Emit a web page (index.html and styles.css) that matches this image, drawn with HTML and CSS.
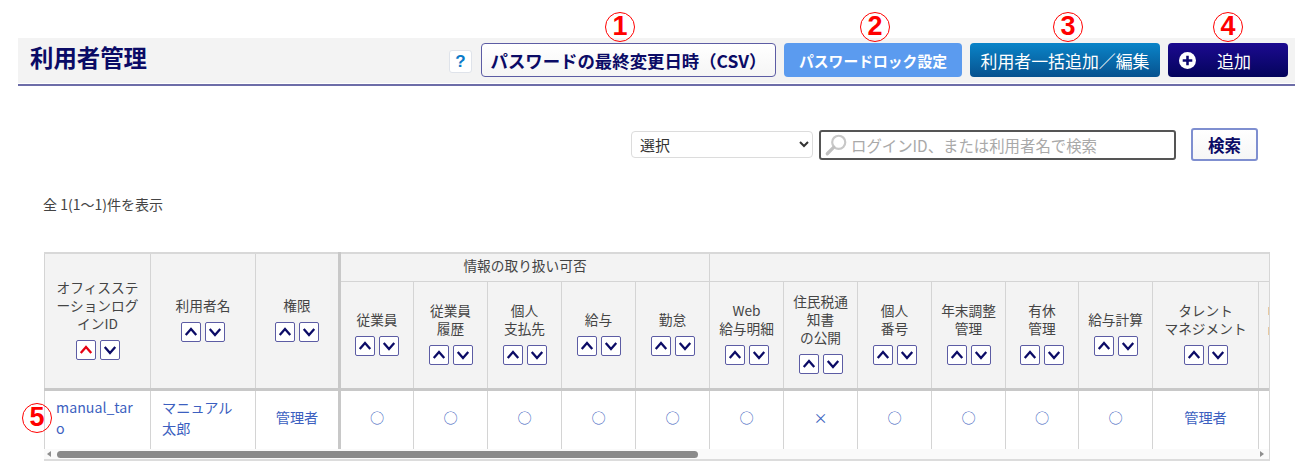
FILE: index.html
```html
<!DOCTYPE html>
<html lang="ja">
<head>
<meta charset="utf-8">
<title>利用者管理</title>
<link rel="stylesheet" href="styles.css">
</head>
<body>
<span class="mark mark-1">1</span>
<span class="mark mark-2">2</span>
<span class="mark mark-3">3</span>
<span class="mark mark-4">4</span>
<span class="mark mark-5">5</span>

<header class="head">
  <div class="head-bar">
    <h1 class="title">利用者管理</h1>
    <div class="actions">
      <button class="help" type="button">?</button>
      <button class="btn btn-csv" type="button">パスワードの最終変更日時（CSV）</button>
      <button class="btn btn-lock" type="button">パスワードロック設定</button>
      <button class="btn btn-bulk" type="button">利用者一括追加／編集</button>
      <button class="btn btn-add" type="button">
        <svg class="plus" viewBox="0 0 16 16" width="17" height="17"><circle cx="8" cy="8" r="8" fill="#fff"/><path d="M8 3.500v9M3.500 8h9" stroke="#0c0670" stroke-width="2.400"/></svg>
        <span>追加</span>
      </button>
    </div>
  </div>
</header>

<form class="search">
  <select class="search-select"><option>選択</option></select>
  <div class="search-box">
    <svg viewBox="0 0 22 22" width="24" height="24"><circle cx="13.500" cy="8.500" r="6" fill="#fff" stroke="#c8c8c8" stroke-width="2"/><path d="M9 13l-6 6" stroke="#c0c0c0" stroke-width="3" stroke-linecap="round"/></svg>
    <input class="search-input" type="text" placeholder="ログインID、または利用者名で検索">
  </div>
  <button class="search-btn" type="button">検索</button>
</form>

<p class="count">全 1(1～1)件を表示</p>

<div class="table-wrap">
  <div class="table-clip">
    <table class="grid">
      <colgroup>
        <col class="c106"><col class="c105"><col class="c84"><col class="c74"><col class="c74"><col class="c74"><col class="c74"><col class="c74"><col class="c74"><col class="c74"><col class="c74"><col class="c74"><col class="c73"><col class="c74"><col class="c106"><col class="c74">
      </colgroup>
      <thead>
        <tr class="row-a">
          <th rowspan="2">オフィスステーションログインID<div class="sort"><span class="arrow active"><svg viewBox="0 0 12 12"><path d="M1.500 8.500L6 3.500l4.500 5"/></svg></span><span class="arrow"><svg viewBox="0 0 12 12"><path d="M1.500 3.500L6 8.500l4.500-5"/></svg></span></div></th>
          <th rowspan="2">利用者名<div class="sort"><span class="arrow"><svg viewBox="0 0 12 12"><path d="M1.500 8.500L6 3.500l4.500 5"/></svg></span><span class="arrow"><svg viewBox="0 0 12 12"><path d="M1.500 3.500L6 8.500l4.500-5"/></svg></span></div></th>
          <th rowspan="2" class="sep-r">権限<div class="sort"><span class="arrow"><svg viewBox="0 0 12 12"><path d="M1.500 8.500L6 3.500l4.500 5"/></svg></span><span class="arrow"><svg viewBox="0 0 12 12"><path d="M1.500 3.500L6 8.500l4.500-5"/></svg></span></div></th>
          <th colspan="5">情報の取り扱い可否</th>
          <th colspan="8"></th>
        </tr>
        <tr class="row-b">
          <th>従業員<div class="sort"><span class="arrow"><svg viewBox="0 0 12 12"><path d="M1.500 8.500L6 3.500l4.500 5"/></svg></span><span class="arrow"><svg viewBox="0 0 12 12"><path d="M1.500 3.500L6 8.500l4.500-5"/></svg></span></div></th>
          <th>従業員<br>履歴<div class="sort"><span class="arrow"><svg viewBox="0 0 12 12"><path d="M1.500 8.500L6 3.500l4.500 5"/></svg></span><span class="arrow"><svg viewBox="0 0 12 12"><path d="M1.500 3.500L6 8.500l4.500-5"/></svg></span></div></th>
          <th>個人<br>支払先<div class="sort"><span class="arrow"><svg viewBox="0 0 12 12"><path d="M1.500 8.500L6 3.500l4.500 5"/></svg></span><span class="arrow"><svg viewBox="0 0 12 12"><path d="M1.500 3.500L6 8.500l4.500-5"/></svg></span></div></th>
          <th>給与<div class="sort"><span class="arrow"><svg viewBox="0 0 12 12"><path d="M1.500 8.500L6 3.500l4.500 5"/></svg></span><span class="arrow"><svg viewBox="0 0 12 12"><path d="M1.500 3.500L6 8.500l4.500-5"/></svg></span></div></th>
          <th>勤怠<div class="sort"><span class="arrow"><svg viewBox="0 0 12 12"><path d="M1.500 8.500L6 3.500l4.500 5"/></svg></span><span class="arrow"><svg viewBox="0 0 12 12"><path d="M1.500 3.500L6 8.500l4.500-5"/></svg></span></div></th>
          <th>Web<br>給与明細<div class="sort"><span class="arrow"><svg viewBox="0 0 12 12"><path d="M1.500 8.500L6 3.500l4.500 5"/></svg></span><span class="arrow"><svg viewBox="0 0 12 12"><path d="M1.500 3.500L6 8.500l4.500-5"/></svg></span></div></th>
          <th>住民税通知書<br>の公開<div class="sort"><span class="arrow"><svg viewBox="0 0 12 12"><path d="M1.500 8.500L6 3.500l4.500 5"/></svg></span><span class="arrow"><svg viewBox="0 0 12 12"><path d="M1.500 3.500L6 8.500l4.500-5"/></svg></span></div></th>
          <th>個人<br>番号<div class="sort"><span class="arrow"><svg viewBox="0 0 12 12"><path d="M1.500 8.500L6 3.500l4.500 5"/></svg></span><span class="arrow"><svg viewBox="0 0 12 12"><path d="M1.500 3.500L6 8.500l4.500-5"/></svg></span></div></th>
          <th>年末調整<br>管理<div class="sort"><span class="arrow"><svg viewBox="0 0 12 12"><path d="M1.500 8.500L6 3.500l4.500 5"/></svg></span><span class="arrow"><svg viewBox="0 0 12 12"><path d="M1.500 3.500L6 8.500l4.500-5"/></svg></span></div></th>
          <th>有休<br>管理<div class="sort"><span class="arrow"><svg viewBox="0 0 12 12"><path d="M1.500 8.500L6 3.500l4.500 5"/></svg></span><span class="arrow"><svg viewBox="0 0 12 12"><path d="M1.500 3.500L6 8.500l4.500-5"/></svg></span></div></th>
          <th>給与計算<div class="sort"><span class="arrow"><svg viewBox="0 0 12 12"><path d="M1.500 8.500L6 3.500l4.500 5"/></svg></span><span class="arrow"><svg viewBox="0 0 12 12"><path d="M1.500 3.500L6 8.500l4.500-5"/></svg></span></div></th>
          <th>タレント<br>マネジメント<div class="sort"><span class="arrow"><svg viewBox="0 0 12 12"><path d="M1.500 8.500L6 3.500l4.500 5"/></svg></span><span class="arrow"><svg viewBox="0 0 12 12"><path d="M1.500 3.500L6 8.500l4.500-5"/></svg></span></div></th>
          <th class="peek"><span class="peek-bit"></span><span class="peek-bit"></span></th>
        </tr>
      </thead>
      <tbody>
        <tr class="row-c">
          <td class="cell-left"><a href="#">manual_taro</a></td>
          <td class="cell-left"><a href="#">マニュアル<br>太郎</a></td>
          <td class="sep-r"><a href="#">管理者</a></td>
          <td><a href="#">○</a></td><td><a href="#">○</a></td><td><a href="#">○</a></td><td><a href="#">○</a></td><td><a href="#">○</a></td>
          <td><a href="#">○</a></td><td><a href="#">×</a></td><td><a href="#">○</a></td><td><a href="#">○</a></td><td><a href="#">○</a></td><td><a href="#">○</a></td>
          <td><a href="#">管理者</a></td>
          <td></td>
        </tr>
      </tbody>
    </table>
  </div>
  <div class="scroll">
    <span class="scroll-left"></span>
    <span class="scroll-thumb"></span>
    <span class="scroll-right"></span>
  </div>
</div>
</body>
</html>
```

FILE: styles.css
```css
* { box-sizing: border-box; }
html, body { margin: 0; padding: 0; }
body {
  position: relative;
  width: 1295px;
  height: 476px;
  overflow: hidden;
  background: #fff;
  font-family: "Noto Sans CJK JP", "Noto Sans", sans-serif;
  color: #444;
}

/* red call-out numbers over the page */
.mark {
  position: absolute;
  z-index: 2;
  width: 30px;
  height: 30px;
  border: 1.500px solid #f00;
  border-radius: 50%;
  color: #f00;
  font-family: "Liberation Sans", sans-serif;
  font-size: 27px;
  font-weight: 700;
  line-height: 27px;
  text-align: center;
}
.mark-1 { left: 605px; top: 12px; }
.mark-2 { left: 860px; top: 12px; }
.mark-3 { left: 1053px; top: 12px; }
.mark-4 { left: 1213px; top: 12px; }
.mark-5 { left: 22px; top: 403px; }

/* page head */
.head {
  margin: 38px 0 0 18px;
  border-bottom: 2px solid #6d6da8;
  padding-bottom: 1px;
}
.head-bar {
  display: flex;
  align-items: center;
  justify-content: space-between;
  height: 45px;
  padding: 0 7px 1px 12px;
  background: #f3f3f3;
}
.title {
  margin: 0 0 7px;
  color: #0b0b66;
  font-size: 23.400px;
  font-weight: 700;
  line-height: 38px;
}
.actions {
  display: flex;
  align-items: center;
  gap: 8px;
}
.help {
  width: 23px;
  height: 23px;
  margin: 3px 1px 0 0;
  padding: 0;
  border: 1px solid #dfe3ea;
  border-radius: 3px;
  background: #fff;
  color: #0a7ac8;
  font-family: "Liberation Sans", sans-serif;
  font-size: 17px;
  font-weight: 700;
}
.btn {
  display: flex;
  align-items: center;
  justify-content: center;
  height: 34px;
  padding: 0;
  border: 0;
  border-radius: 4px;
  font-family: inherit;
  white-space: nowrap;
}
.btn-csv {
  width: 295px;
  border: 1px solid #5c5ca4;
  background: linear-gradient(#fff, #f5f5f5);
  color: #0b0b66;
  font-size: 17.400px;
  font-weight: 700;
}
.btn-lock {
  width: 178px;
  background: #5b9bef;
  color: #fff;
  font-size: 14.800px;
  font-weight: 700;
}
.btn-bulk {
  width: 190px;
  background: linear-gradient(#0a84c8, #07528f);
  color: #fff;
  font-size: 16.900px;
}
.btn-add {
  width: 120px;
  justify-content: flex-start;
  padding-left: 11px;
  gap: 21px;
  background: linear-gradient(#1c0a90, #04045c);
  color: #fff;
  font-size: 17px;
}
.plus { flex: none; }

/* search row */
.search {
  display: flex;
  align-items: center;
  justify-content: flex-end;
  margin-top: 42px;
  padding-right: 37px;
}
.search-select {
  width: 182px;
  height: 27px;
  margin-right: 6px;
  padding: 0 4px;
  border: 1px solid #dcdcdc;
  border-radius: 4px;
  background: #fff;
  color: #333;
  font-family: inherit;
  font-size: 15px;
}
.search-box {
  display: flex;
  align-items: center;
  width: 357px;
  height: 30px;
  margin-right: 15px;
  padding-left: 3px;
  border: 2px solid #555;
  border-radius: 3px;
  background: #fff;
}
.search-input {
  flex: 1;
  min-width: 0;
  padding: 0 0 0 3px;
  border: 0;
  outline: 0;
  font-family: inherit;
  font-size: 15.400px;
}
.search-input::placeholder { color: #a9a9a9; opacity: 1; }
.search-btn {
  width: 67px;
  height: 33px;
  padding: 0;
  border: 2px solid #7f8fd0;
  border-radius: 3px;
  background: linear-gradient(#fff, #f6f6f6);
  color: #0b0b66;
  font-family: inherit;
  font-size: 16.500px;
  font-weight: 700;
}

.count {
  margin: 34px 0 0 43px;
  color: #444;
  font-size: 14px;
  line-height: 18px;
}

/* table */
.table-wrap {
  width: 1226px;
  margin: 39px 0 0 44px;
  border-right: 1px solid #d6d6d6;
  border-bottom: 2px solid #dcdcdc;
}
.table-clip { overflow: hidden; }
.grid {
  width: 1288px;
  table-layout: fixed;
  border-collapse: collapse;
  font-size: 13.700px;
  line-height: 18px;
}
.c106 { width: 106px; }
.c105 { width: 105px; }
.c84 { width: 84px; }
.c74 { width: 74px; }
.c73 { width: 73px; }
.grid th,
.grid td {
  border: 1px solid #d4d4d4;
  padding: 0 3px;
  text-align: center;
  vertical-align: middle;
  word-break: break-all;
}
.grid th {
  padding-bottom: 3px;
  background: #f3f3f3;
  color: #444;
  font-weight: 400;
}
.grid th[rowspan] { padding: 0 11px 3px; }
.grid tr:first-child th { border-top: 2px solid #d8d8d8; padding-bottom: 4px; }
.grid thead tr:last-child th,
.grid th[rowspan] { border-bottom: 3px solid #c8c8c8; }
.grid .sep-r { border-right: 3px solid #c8c8c8; }
.grid tbody td { padding-bottom: 4px; border-bottom: 0; border-top: 0; }
.row-a { height: 28px; }
.row-b { height: 108px; }
.row-c { height: 60px; }
.row-c td { font-size: 14.200px; line-height: 21px; }
.grid .cell-left { padding: 0 12px 4px 11px; text-align: left; }
.grid a { color: #3c5fc0; text-decoration: none; }

.sort {
  display: flex;
  justify-content: center;
  gap: 4px;
  margin-top: 8px;
}
.arrow {
  display: block;
  width: 20px;
  height: 20px;
  padding: 2px;
  border: 1px solid #5c5ca4;
  border-radius: 2px;
  background: #fff;
}
.arrow svg {
  display: block;
  width: 100%;
  height: 100%;
  fill: none;
  stroke: #0b0b66;
  stroke-width: 2;
}
.arrow.active svg { stroke: #e60012; }

.grid .peek { padding: 0 0 16px 9px; text-align: left; }
.peek-bit {
  display: block;
  width: 4px;
  height: 8px;
  margin-bottom: 12px;
  background: #e8c9a0;
}

/* scrollbar */
.scroll {
  display: flex;
  align-items: center;
  height: 10px;
  padding: 0 5px 0 3px;
  background: #fafafa;
}
.scroll-left {
  width: 0;
  height: 0;
  border: 3px solid transparent;
  border-left-width: 0;
  border-right: 4px solid #8e8e8e;
}
.scroll-thumb {
  width: 641px;
  height: 7px;
  margin-left: 6px;
  border-radius: 4px;
  background: #8a8a8a;
}
.scroll-right {
  width: 0;
  height: 0;
  margin-left: auto;
  border: 3px solid transparent;
  border-right-width: 0;
  border-left: 4px solid #8e8e8e;
}
```
